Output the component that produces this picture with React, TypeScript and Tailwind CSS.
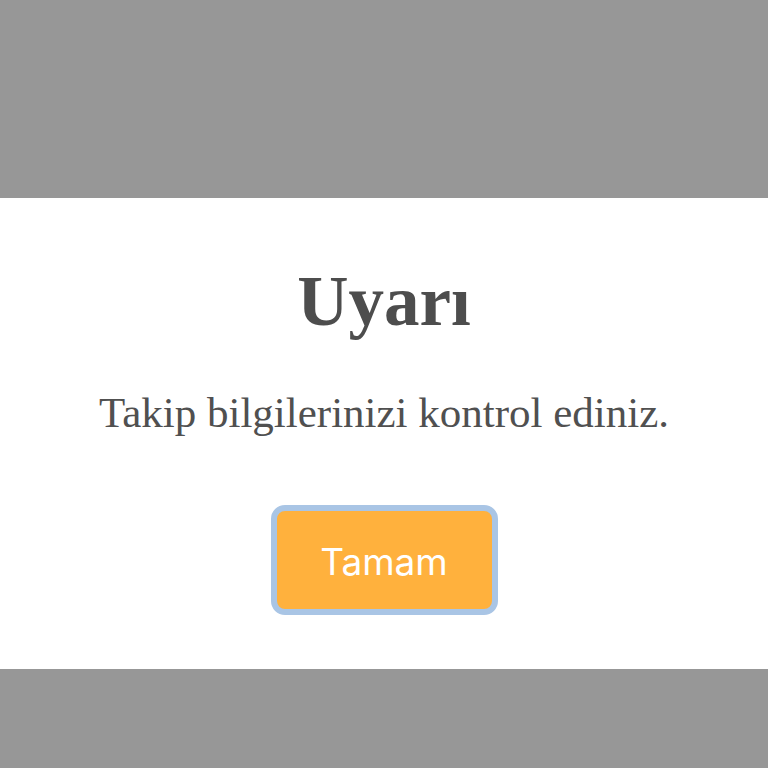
export default function App() {
  return (
    <div className="w-[768px] h-[768px] flex flex-col bg-[#979797]">
      <div className="h-[198px] shrink-0" />
      <div className="bg-white flex flex-col items-center pt-[68px] pb-[54px]">
        <h1
          className="text-[71px] leading-none font-bold text-[#4d4d4d]"
          style={{ fontFamily: '"Liberation Serif", "Times New Roman", serif' }}
        >
          Uyarı
        </h1>
        <p
          className="mt-[54px] text-[43px] leading-none text-[#505050]"
          style={{ fontFamily: '"Liberation Serif", "Times New Roman", serif' }}
        >
          Takip bilgilerinizi kontrol ediniz.
        </p>
        <button
          className="mt-[71px] w-[227px] h-[110px] rounded-[14px] border-[6px] border-[#a9c5e5] bg-[#ffb13d] text-white text-[37px] flex items-center justify-center pt-[3px]"
          style={{ fontFamily: 'Inter, "Noto Sans", sans-serif' }}
        >
          Tamam
        </button>
      </div>
    </div>
  );
}
